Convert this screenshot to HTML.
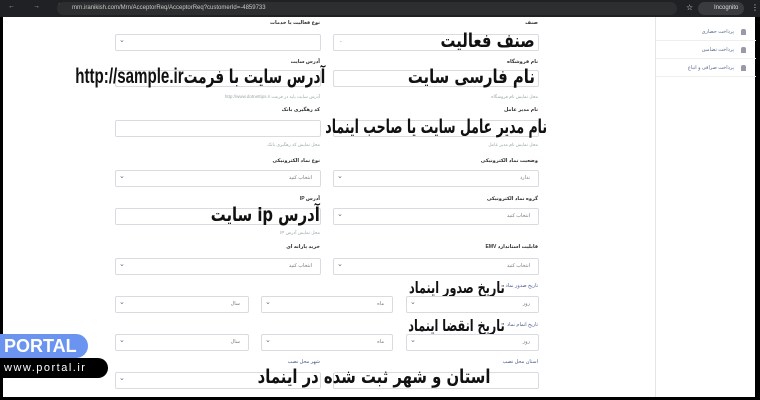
<!DOCTYPE html>
<html><head><meta charset="utf-8"><style>
*{margin:0;padding:0;box-sizing:border-box}
body{width:760px;height:400px;background:#000;position:relative;overflow:hidden;font-family:"Liberation Sans","DejaVu Sans",sans-serif}
.page{position:absolute;left:3px;top:17px;width:752px;height:380px;background:#fff}
.a{position:absolute}
.bar{left:0;top:0;width:760px;height:17px;background:#202124}
.url{left:57px;top:2px;width:620px;height:13px;background:#2d2e30;border-radius:7px;color:#c8c8c8;font-size:6px;line-height:13px;padding-left:15px}
.inc{left:698px;top:2px;width:46px;height:13px;background:#3a3b3e;border-radius:7px;color:#ddd;font-size:6px;line-height:13px;padding-left:16px}
.in{position:absolute;height:17px;border:1px solid #d8dbe0;border-radius:2px;background:#fff}
.in.s::before{content:"⌄";position:absolute;left:3px;top:1px;font-size:7px;color:#666}
.in span{position:absolute;right:8px;top:4px;font-size:5px;color:#777}
.lb{position:absolute;font-size:5px;color:#333;direction:rtl;font-weight:bold}
.ht{position:absolute;font-size:4.5px;color:#9aa;direction:rtl}
.big{position:absolute;font-size:19px;font-weight:bold;color:#111;white-space:nowrap;direction:rtl;line-height:22px;font-family:"DejaVu Sans",sans-serif;transform:scaleX(0.78);transform-origin:right center}
.side{left:655px;top:17px;width:100px;height:380px;border-left:1px solid #e5e5e5;background:#fff}
.si{position:absolute;left:0;width:100px;height:18px;border-bottom:1px solid #eee;font-size:5px;color:#5a6b90;text-align:right;padding-right:22px;line-height:18px}
.si::after{content:"";position:absolute;right:10px;top:6px;width:5px;height:6px;background:#99a;border-radius:2px 2px 0 0}
</style></head><body>
<div class="a bar"></div>
<div class="a" style="left:8px;top:3px;color:#aaa;font-size:7px;letter-spacing:8px">← → C ⌂</div>
<div class="a url">mrn.iranikish.com/Mrn/AcceptorReq/AcceptorReq?customerId=-4859733</div>
<div class="a" style="left:686px;top:3px;color:#ddd;font-size:8px">☆</div>
<div class="a inc">Incognito</div>
<div class="a" style="left:751px;top:3px;color:#ddd;font-size:8px">⋮</div>
<div class="page"></div>
<div class="a side">
<div class="si" style="top:6px">پرداخت حضاری</div>
<div class="si" style="top:24px">پرداخت تضامین</div>
<div class="si" style="top:42px">پرداخت صرافی و اتباع</div>
</div>

<div class="lb" style="right:440px;top:20px">نوع فعالیت یا خدمات</div>
<div class="lb" style="right:222px;top:20px">صنف</div>
<div class="in s" style="left:115px;top:34px;width:206px"></div>
<div class="in" style="left:333px;top:34px;width:206px"><span style="left:6px;right:auto">-</span></div>
<div class="big" style="right:225px;top:30px">صنف فعالیت</div>

<div class="lb" style="right:440px;top:59px">آدرس سایت</div>
<div class="lb" style="right:222px;top:59px">نام فروشگاه</div>
<div class="in" style="left:115px;top:70px;width:206px"></div>
<div class="in" style="left:333px;top:70px;width:206px"></div>
<div class="big" style="right:435px;top:66px;transform:scaleX(0.72)">آدرس سایت با فرمت<span style="font-family:'Liberation Sans',sans-serif;font-size:21px">http://sample.ir</span></div>
<div class="big" style="right:225px;top:66px">نام فارسی سایت</div>
<div class="ht" style="right:440px;top:94px">آدرس سایت باید در فرمت http://www.dotnettips.ir</div>
<div class="ht" style="right:222px;top:94px">محل نمایش نام فروشگاه</div>

<div class="lb" style="right:440px;top:107px">کد رهگیری بانک</div>
<div class="lb" style="right:222px;top:107px">نام مدیر عامل</div>
<div class="in" style="left:115px;top:120px;width:206px"></div>
<div class="in" style="left:333px;top:120px;width:206px"></div>
<div class="big" style="right:213px;top:116px;transform:scaleX(0.66)">نام مدیر عامل سایت یا صاحب اینماد</div>
<div class="ht" style="right:440px;top:142px">محل نمایش کد رهگیری بانک</div>
<div class="ht" style="right:222px;top:142px">محل نمایش نام مدیر عامل</div>

<div class="lb" style="right:440px;top:158px">نوع نماد الکترونیکی</div>
<div class="lb" style="right:222px;top:158px">وضعیت نماد الکترونیکی</div>
<div class="in s" style="left:115px;top:170px;width:206px"><span>انتخاب کنید</span></div>
<div class="in s" style="left:333px;top:170px;width:206px"><span>ندارد</span></div>

<div class="lb" style="right:440px;top:196px">آدرس IP</div>
<div class="lb" style="right:222px;top:196px">گروه نماد الکترونیکی</div>
<div class="in" style="left:115px;top:208px;width:206px"></div>
<div class="in s" style="left:333px;top:208px;width:206px"><span>انتخاب کنید</span></div>
<div class="big" style="right:440px;top:204px">آدرس ip سایت</div>
<div class="ht" style="right:440px;top:230px">محل نمایش آدرس IP</div>

<div class="lb" style="right:440px;top:244px">خرید پارانه ای</div>
<div class="lb" style="right:222px;top:244px">قابلیت استاندارد EMV</div>
<div class="in s" style="left:115px;top:258px;width:206px"><span>انتخاب کنید</span></div>
<div class="in s" style="left:333px;top:258px;width:206px"><span>انتخاب کنید</span></div>

<div class="lb" style="right:222px;top:283px;color:#4a5a8a;font-weight:normal">تاریخ صدور نماد</div>
<div class="big" style="right:255px;top:277px;font-size:16px;transform:scaleX(0.7)">تاریخ صدور اینماد</div>
<div class="in s" style="left:115px;top:296px;width:134px"><span>سال</span></div>
<div class="in s" style="left:261px;top:296px;width:132px"><span>ماه</span></div>
<div class="in s" style="left:406px;top:296px;width:133px"><span>روز</span></div>

<div class="lb" style="right:222px;top:322px;color:#4a5a8a;font-weight:normal">تاریخ اتمام نماد</div>
<div class="big" style="right:255px;top:315px;font-size:16px;transform:scaleX(0.7)">تاریخ انقضا اینماد</div>
<div class="in s" style="left:115px;top:334px;width:134px"><span>سال</span></div>
<div class="in s" style="left:261px;top:334px;width:132px"><span>ماه</span></div>
<div class="in s" style="left:406px;top:334px;width:133px"><span>روز</span></div>

<div class="lb" style="right:440px;top:359px;color:#4a5a8a;font-weight:normal">شهر محل نصب</div>
<div class="lb" style="right:222px;top:359px;color:#4a5a8a;font-weight:normal">استان محل نصب</div>
<div class="in s" style="left:115px;top:372px;width:206px"></div>
<div class="in" style="left:333px;top:372px;width:206px"></div>
<div class="big" style="right:270px;top:366px">استان و شهر ثبت شده در اینماد</div>

<div class="a" style="left:0;top:334px;width:88px;height:24px;background:#6b94f0;border-radius:0 12px 12px 0;color:#fff;font-weight:bold;font-size:18px;line-height:24px;padding-left:4px">PORTAL</div>
<div class="a" style="left:0;top:358px;width:108px;height:20px;background:#000;border-radius:0 10px 10px 0;color:#fff;font-size:11px;line-height:20px;padding-left:4px;letter-spacing:1.5px">www.portal.ir</div>
</body></html>
